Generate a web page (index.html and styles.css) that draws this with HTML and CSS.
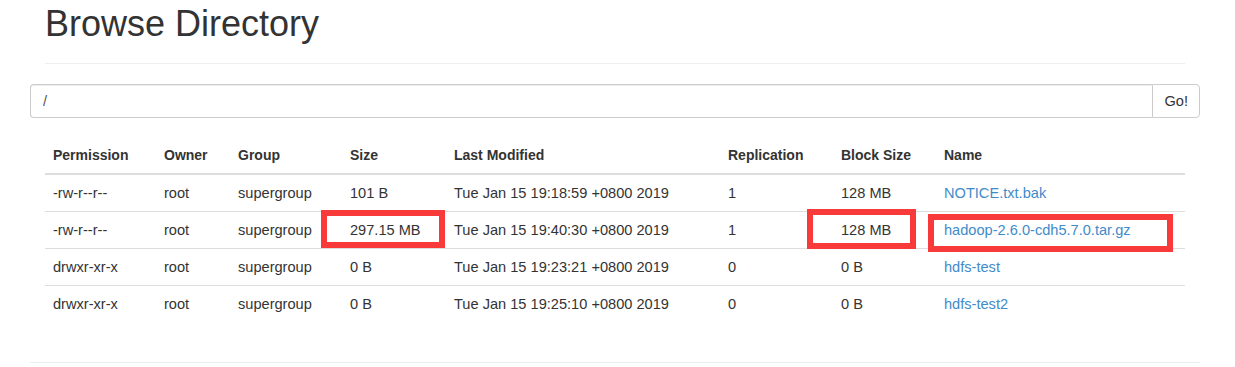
FILE: index.html
```html
<!DOCTYPE html>
<html lang="en">
<head>
  <meta charset="UTF-8" />
  <title>Browsing HDFS</title>
  <link rel="stylesheet" href="styles.css">
</head>
<body>
  <div class="container">
    <div class="page-header">
      <h1>Browse Directory</h1>
    </div>

    <div class="row">
      <form class="input-group" onsubmit="return false">
        <input type="text" class="form-control" value="/">
        <button class="btn">Go!</button>
      </form>
    </div>

    <div class="table-wrap">
      <table class="table">
        <thead>
          <tr>
            <th class="c-perm">Permission</th>
            <th class="c-owner">Owner</th>
            <th class="c-group">Group</th>
            <th class="c-size">Size</th>
            <th class="c-mod">Last Modified</th>
            <th class="c-rep">Replication</th>
            <th class="c-block">Block Size</th>
            <th>Name</th>
          </tr>
        </thead>
        <tbody>
          <tr>
            <td>-rw-r--r--</td>
            <td>root</td>
            <td>supergroup</td>
            <td>101 B</td>
            <td>Tue Jan 15 19:18:59 +0800 2019</td>
            <td>1</td>
            <td>128 MB</td>
            <td><a href="#">NOTICE.txt.bak</a></td>
          </tr>
          <tr>
            <td>-rw-r--r--</td>
            <td>root</td>
            <td>supergroup</td>
            <td>297.15 MB</td>
            <td>Tue Jan 15 19:40:30 +0800 2019</td>
            <td>1</td>
            <td>128 MB</td>
            <td><a href="#">hadoop-2.6.0-cdh5.7.0.tar.gz</a></td>
          </tr>
          <tr>
            <td>drwxr-xr-x</td>
            <td>root</td>
            <td>supergroup</td>
            <td>0 B</td>
            <td>Tue Jan 15 19:23:21 +0800 2019</td>
            <td>0</td>
            <td>0 B</td>
            <td><a href="#">hdfs-test</a></td>
          </tr>
          <tr>
            <td>drwxr-xr-x</td>
            <td>root</td>
            <td>supergroup</td>
            <td>0 B</td>
            <td>Tue Jan 15 19:25:10 +0800 2019</td>
            <td>0</td>
            <td>0 B</td>
            <td><a href="#">hdfs-test2</a></td>
          </tr>
        </tbody>
      </table>

      <!-- annotation boxes -->
      <span class="mark mark-size"></span>
      <span class="mark mark-block"></span>
      <span class="mark mark-name"></span>
    </div>

    <hr class="footer-line">
  </div>
</body>
</html>
```

FILE: styles.css
```css
* {
  box-sizing: border-box;
}

body {
  margin: 0;
  font-family: "Liberation Sans", Arial, sans-serif;
  font-size: 14px;
  line-height: 20px;
  color: #333;
  background: #fff;
}

.container {
  width: 1170px;
  margin-left: 30px;
  padding: 0 15px;
}

.page-header {
  padding-bottom: 9px;
  margin: 4px 0 20px;
  border-bottom: 1px solid #eee;
}

h1 {
  margin: 0 0 10px;
  font-size: 36px;
  font-weight: normal;
  line-height: 39.6px;
}

.row {
  margin: 0 -15px;
}

.input-group {
  display: flex;
  margin: 0;
}

.form-control {
  flex: 1;
  height: 34px;
  padding: 6px 12px;
  font: inherit;
  font-size: 14.6px;
  color: #555;
  border: 1px solid #ccc;
  border-right: none;
  border-radius: 4px 0 0 4px;
  box-shadow: inset 0 1px 1px rgba(0,0,0,0.075);
  outline: none;
}

.btn {
  height: 34px;
  padding: 6px 11px;
  font: inherit;
  font-size: 14.6px;
  color: #333;
  background: #fff;
  border: 1px solid #ccc;
  border-radius: 0 4px 4px 0;
  cursor: pointer;
}

.table-wrap {
  position: relative;
  margin-top: 19px;
}

.table {
  width: 100%;
  border-collapse: collapse;
  margin-bottom: 20px;
}

.table th,
.table td {
  padding: 8px;
  text-align: left;
  vertical-align: top;
  line-height: 20px;
}

.table th {
  font-weight: bold;
  border-bottom: 2px solid #ddd;
}

.table td {
  font-size: 14.6px;
  border-top: 1px solid #ddd;
}

.c-perm { width: 111px; }
.c-owner { width: 74px; }
.c-group { width: 112px; }
.c-size { width: 104px; }
.c-mod { width: 274px; }
.c-rep { width: 113px; }
.c-block { width: 103px; }

.table a {
  color: #428bca;
  text-decoration: none;
}

.mark {
  position: absolute;
  border: 6px solid #f93a3a;
}

.mark-size {
  left: 276px;
  top: 73px;
  width: 124px;
  height: 38px;
}

.mark-block {
  left: 762px;
  top: 72px;
  width: 109px;
  height: 40px;
}

.mark-name {
  left: 883px;
  top: 77px;
  width: 245px;
  height: 38px;
}

.footer-line {
  margin: 40px -15px 0;
  border: 0;
  border-top: 1px solid #eee;
}
```
